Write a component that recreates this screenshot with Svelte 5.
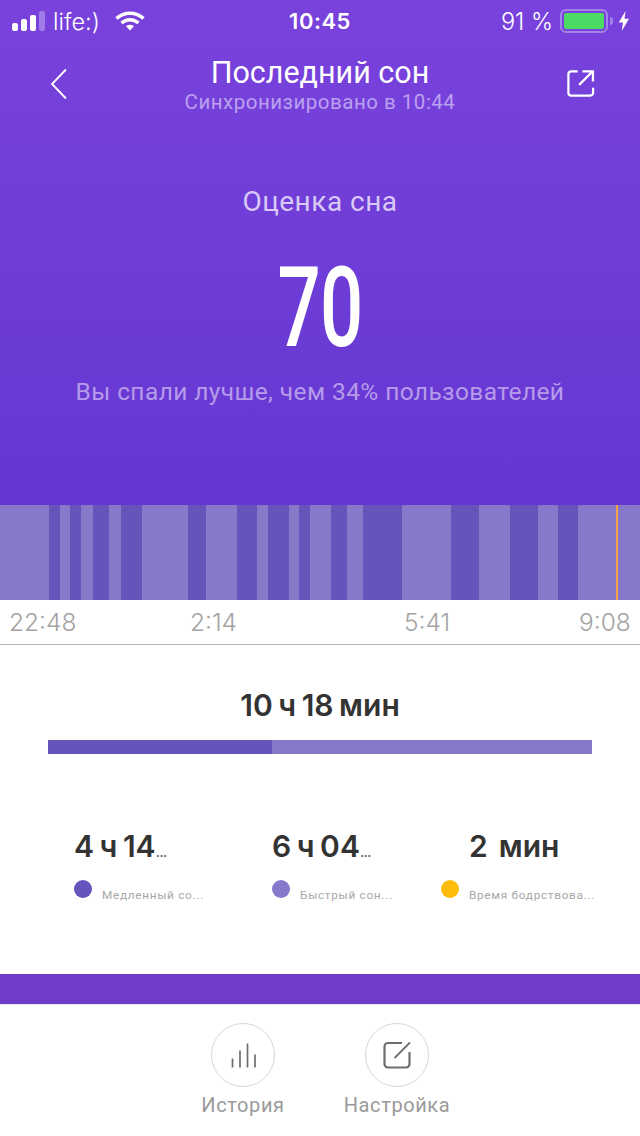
<script>
	// x boundaries of the sleep phases, alternating light / dark
	const edges = [0, 49, 60, 70, 81, 93, 109, 121, 142, 188, 206, 237, 257, 268, 289, 299, 310, 331, 347, 363, 402, 451, 479, 510, 538, 558, 578, 640];
	const phases = edges.slice(1).map((end, i) => ({
		width: end - edges[i],
		deep: i % 2 === 1
	}));

	const times = ['22:48', '2:14', '5:41', '9:08'];

	const stats = [
		{ value: '4 ч 14', more: '...', label: 'Медленный со...', color: '#6654bd', cls: 'deep' },
		{ value: '6 ч 04', more: '...', label: 'Быстрый сон...', color: '#8878ca', cls: 'rem' },
		{ value: '2  мин', more: '', label: 'Время бодрствова...', color: '#fdbb0a', cls: 'awake' }
	];
</script>

<div class="page">
	<section class="hero">
		<div class="status">
			<div class="status-left">
				<span class="signal">
					<i class="b1"></i><i class="b2"></i><i class="b3"></i><i class="b4"></i>
				</span>
				<span class="carrier">life:)</span>
				<svg class="wifi" width="30" height="22" viewBox="0 0 30 22">
					<path d="M1.5 8.5C9 1.5 21 1.5 28.500 8.500" fill="none" stroke="#fff" stroke-width="3.500" />
					<path d="M6.500 13C11.500 8.500 18.500 8.500 23.500 13" fill="none" stroke="#fff" stroke-width="3.500" />
					<path d="M11 16.200C13.500 14.300 16.500 14.300 19 16.200L15 20.500Z" fill="#fff" />
				</svg>
			</div>
			<div class="clock">10:45</div>
			<div class="status-right">
				<span class="percent">91 %</span>
				<span class="battery"><span class="charge"></span></span>
				<span class="nub"></span>
				<svg width="12" height="20" viewBox="0 0 12 20">
					<path d="M7.500 0L0.800 11.500H5L3.800 20L11 7.800H6.500Z" fill="#fff" />
				</svg>
			</div>
		</div>

		<div class="nav">
			<svg class="back" width="18" height="32" viewBox="0 0 18 32">
				<path d="M16 1.500L2 16L16 30.500" fill="none" stroke="#fff" stroke-width="1.800" />
			</svg>
			<div class="titles">
				<h1>Последний сон</h1>
				<p>Синхронизировано в 10:44</p>
			</div>
			<svg class="share" width="28" height="28" viewBox="0 0 30 30">
				<path d="M11.500 2.500H4.500A3 3 0 0 0 1.500 5.500V25.500A3 3 0 0 0 4.500 28.500H25A3 3 0 0 0 28 25.500V20" fill="none" stroke="#fff" stroke-width="2.400" />
				<path d="M13 17L27 3M16.500 2.500H27.800V13.500" fill="none" stroke="#fff" stroke-width="2.400" />
			</svg>
		</div>

		<div class="score-label">Оценка сна</div>
		<div class="score">70</div>
		<div class="compare">Вы спали лучше, чем 34% пользователей</div>
	</section>

	<div class="chart">
		{#each phases as phase}
			<div class="phase" class:deep={phase.deep} style="width: {phase.width}px"></div>
		{/each}
		<div class="marker"></div>
	</div>

	<div class="axis">
		{#each times as time}
			<span>{time}</span>
		{/each}
	</div>

	<section class="summary">
		<div class="total">10 ч 18 мин</div>
		<div class="ratio">
			<div class="ratio-deep"></div>
			<div class="ratio-rem"></div>
		</div>

		<div class="stats">
			{#each stats as stat}
				<div class="stat {stat.cls}">
					<div class="stat-value">{stat.value}<small>{stat.more}</small></div>
					<div class="stat-label">
						<span class="dot" style="background: {stat.color}"></span>
						<span class="label-text">{stat.label}</span>
					</div>
				</div>
			{/each}
		</div>
	</section>

	<div class="band"></div>

	<footer class="actions">
		<div class="action">
			<span class="circle">
				<svg width="25" height="25" viewBox="0 0 25 25">
					<path d="M1.500 15.500V24.500M9 7.500V24.500M16.500 0.500V24.500M24 11.500V24.500" fill="none" stroke="#6e6e72" stroke-width="1.700" />
				</svg>
			</span>
			<span class="action-label">История</span>
		</div>
		<div class="action">
			<span class="circle">
				<svg width="28" height="28" viewBox="0 0 28 28">
					<path d="M19 2H5A3.500 3.500 0 0 0 1.500 5.500V23A3.500 3.500 0 0 0 5 26.500H23A3.500 3.500 0 0 0 26.500 23V11" fill="none" stroke="#6e6e72" stroke-width="2.200" />
					<path d="M11.500 17L27 1.500" fill="none" stroke="#6e6e72" stroke-width="1.800" />
				</svg>
			</span>
			<span class="action-label">Настройка</span>
		</div>
	</footer>
</div>

<style>
	:global(body) {
		margin: 0;
		background: #fff;
	}

	.page {
		width: 640px;
		height: 1136px;
		overflow: hidden;
		display: flex;
		flex-direction: column;
		font-family: Roboto, "Liberation Sans", sans-serif;
	}

	.hero {
		height: 505px;
		box-sizing: border-box;
		background: linear-gradient(180deg, #7a42dc 0%, #6437d2 100%);
		color: #fff;
		text-align: center;
	}

	.status {
		height: 42px;
		padding: 0 10px 0 12px;
		display: flex;
		align-items: center;
		justify-content: space-between;
		position: relative;
		font-family: Inter, sans-serif;
	}

	.status-left,
	.status-right {
		display: flex;
		align-items: center;
	}

	.signal {
		display: flex;
		align-items: flex-end;
		gap: 3px;
		height: 20px;
		margin-right: 7px;
	}

	.signal i {
		width: 6px;
		border-radius: 2px;
		background: #fff;
	}

	.b1 { height: 8px; }
	.b2 { height: 12px; }
	.b3 { height: 16px; }
	.signal .b4 {
		height: 20px;
		background: #9f7ce8;
	}

	.carrier {
		font-size: 23.500px;
		font-weight: 300;
		margin-left: 1px;
		margin-right: 15px;
	}

	.clock {
		position: absolute;
		left: 0;
		right: 0;
		text-align: center;
		font-size: 22px;
		font-weight: 600;
		letter-spacing: 0.5px;
	}

	.percent {
		font-size: 23.500px;
		font-weight: 300;
		margin-right: 7px;
	}

	.battery {
		width: 48px;
		height: 24px;
		box-sizing: border-box;
		padding: 2px;
		border: 2px solid #a382ea;
		border-radius: 6px;
		display: flex;
	}

	.charge {
		flex: 1;
		background: #4cd964;
		border-radius: 2px;
	}

	.nub {
		width: 3px;
		height: 8px;
		margin: 0 5px 0 2px;
		background: #a382ea;
		border-radius: 0 3px 3px 0;
	}

	.nav {
		height: 62px;
		box-sizing: border-box;
		padding: 26px 45px 0 50px;
		display: flex;
		align-items: flex-start;
		justify-content: space-between;
		position: relative;
	}

	.share {
		margin-top: 1px;
	}

	.titles {
		position: absolute;
		left: 0;
		right: 0;
		top: 14px;
	}

	h1 {
		margin: 0;
		font-size: 30.500px;
		font-weight: 400;
		line-height: 34px;
	}

	.titles p {
		margin: 0;
		font-size: 20.500px;
		line-height: 24px;
		letter-spacing: 0.5px;
		color: #bba1f0;
	}

	.score-label {
		margin-top: 80px;
		font-size: 28px;
		line-height: 36px;
		letter-spacing: 0.5px;
		color: #d9c9f7;
	}

	.score {
		margin-top: 36px;
		height: 104px;
		font-size: 112px;
		line-height: 104px;
		font-weight: 500;
		transform: scaleX(0.68);
		letter-spacing: -1px;
	}

	.compare {
		margin-top: 17px;
		font-size: 24.500px;
		line-height: 30px;
		letter-spacing: 0.4px;
		color: #b59bea;
	}

	.chart {
		height: 95px;
		display: flex;
		position: relative;
	}

	.phase {
		background: #8878ca;
	}

	.phase.deep {
		background: #6654bb;
	}

	.marker {
		position: absolute;
		left: 616px;
		top: 0;
		bottom: 0;
		width: 2px;
		background: #f3a04a;
	}

	.axis {
		height: 45px;
		box-sizing: border-box;
		border-bottom: 1px solid #b5b5b5;
		padding: 0 0 0 9px;
		display: grid;
		grid-template-columns: 181px 214px 175px auto;
		align-items: center;
		font-size: 24.500px;
		color: #a3a3a3;
		font-family: Inter, sans-serif;
		font-weight: 300;
	}

	.summary {
		height: 329px;
		box-sizing: border-box;
		padding: 0 48px;
	}

	.total {
		margin-top: 42px;
		text-align: center;
		font-family: Inter, sans-serif;
		font-size: 30px;
		line-height: 36px;
		font-weight: 600;
		word-spacing: -2px;
		color: #333;
	}

	.ratio {
		margin-top: 17px;
		height: 14px;
		display: flex;
	}

	.ratio-deep {
		width: 224px;
		background: #6654bb;
	}

	.ratio-rem {
		flex: 1;
		background: #8878ca;
	}

	.stats {
		margin-top: 74px;
		display: flex;
	}

	.stat {
		flex: none;
		box-sizing: border-box;
		padding-left: 26px;
	}

	.stat.deep {
		width: 198px;
	}

	.stat.rem {
		width: 169px;
	}

	.stat.awake {
		width: 180px;
	}

	.stat-value {
		font-family: Inter, sans-serif;
		font-size: 30px;
		line-height: 36px;
		font-weight: 600;
		word-spacing: -2px;
		color: #333;
		white-space: pre;
	}

	.stat.awake .stat-value {
		word-spacing: -2px;
		padding-left: 28px;
	}

	.stat-value small {
		font-size: 16px;
		font-weight: 400;
		color: #666;
		letter-spacing: -1px;
	}

	.stat-label {
		margin-top: 11px;
		display: flex;
		align-items: flex-start;
		gap: 10px;
	}

	.dot {
		width: 18px;
		height: 18px;
		border-radius: 50%;
		flex: none;
	}

	.label-text {
		margin-top: 7px;
		font-size: 11.800px;
		line-height: 16px;
		letter-spacing: 0.7px;
		color: #a8a8a8;
		white-space: nowrap;
	}

	.band {
		height: 30px;
		background: #6f3dc9;
	}

	.actions {
		flex: 1;
		border-top: 1px solid #e8e4f0;
		display: flex;
		justify-content: center;
		gap: 48px;
		padding-top: 18px;
	}

	.action {
		display: flex;
		flex-direction: column;
		align-items: center;
		gap: 4px;
		width: 106px;
	}

	.circle {
		width: 64px;
		height: 64px;
		box-sizing: border-box;
		border: 1px solid #d6d6d6;
		border-radius: 50%;
		display: flex;
		align-items: center;
		justify-content: center;
	}

	.action-label {
		font-size: 20px;
		line-height: 28px;
		letter-spacing: 0.6px;
		color: #9a9a9a;
		white-space: nowrap;
	}
</style>
